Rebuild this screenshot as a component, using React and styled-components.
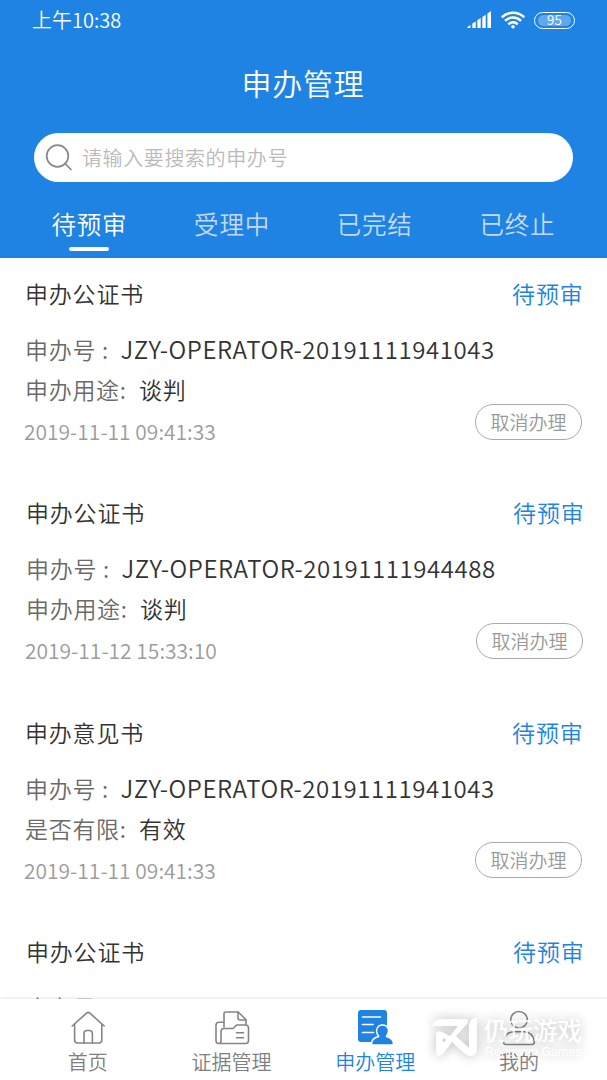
import React, { useState } from 'react'

import styled, { createGlobalStyle } from 'styled-components'

const TABS = ['待预审', '受理中', '已完结', '已终止']

const RECORDS = [
    {
        title: '申办公证书',
        number: 'JZY-OPERATOR-20191111941043',
        label: '申办用途:',
        value: '谈判',
        date: '2019-11-11 09:41:33',
    },
    {
        title: '申办公证书',
        number: 'JZY-OPERATOR-20191111944488',
        label: '申办用途:',
        value: '谈判',
        date: '2019-11-12 15:33:10',
    },
    {
        title: '申办意见书',
        number: 'JZY-OPERATOR-20191111941043',
        label: '是否有限:',
        value: '有效',
        date: '2019-11-11 09:41:33',
    },
    {
        title: '申办公证书',
        number: 'JZY-OPERATOR-20191111944488',
    },
]

function SignalIcon() {
    return (
        <svg width="25" height="18" viewBox="0 0 25 18" fill="#fff">
            <path d="M0.3 17v-1l3.2-2v3zM5.3 17v-4.400l3.400-2.200V17zM10.300 17V9.200l3.400-2.200V17zM15.300 17V6l3.400-2.200V17zM20.400 17V2.600l3.600-2.600V17z" />
        </svg>
    )
}

function WifiIcon() {
    return (
        <svg
            width="24"
            height="18"
            viewBox="0 0 24 18"
            fill="none"
            stroke="#fff"
            strokeWidth="2.500"
        >
            <path d="M0.800 6.300C7 0.200 17 0.200 23.200 6.300" />
            <path d="M4 9.900c4.500-4.400 11.500-4.400 16 0" />
            <path d="M7.300 13.300c2.600-2.600 6.800-2.600 9.400 0" />
            <circle cx="12" cy="15.700" r="1.800" fill="#fff" stroke="none" />
        </svg>
    )
}

function SearchIcon() {
    return (
        <svg
            width="28"
            height="28"
            viewBox="0 0 28 28"
            fill="none"
            stroke="#888"
            strokeWidth="1.700"
            strokeLinecap="round"
        >
            <circle cx="12.500" cy="12" r="10.800" />
            <path d="M20 19.500l6 6" />
        </svg>
    )
}

function HomeIcon() {
    return (
        <svg width="36" height="36" viewBox="0 0 36 36">
            <path d="M2.200 16L16.500 3.200q1.700-1.500 3.400 0L34.200 16" />
            <path d="M4.600 14.800v15.200q0 3 3 3h21.200q3 0 3-3V14.800" />
            <path d="M14 33V23.500q0-3 3-3h2.400q3 0 3 3V33" />
        </svg>
    )
}

function FolderIcon() {
    return (
        <svg width="36" height="36" viewBox="0 0 36 36">
            <path d="M10 17V4q0-2 2-2h12.200l7.800 7.700V15" />
            <path d="M24 2v6q0 2 2 2h6" />
            <path d="M10 12.200H5q-3 0-3 3V30.500q0 3 3 3h26.500q3 0 3-3V18q0-3-3-3H22.500l-3.500 3.500H10q-3 0-3 3V30.500q0 3-2 3" />
            <path d="M22.500 22.800h7M22.500 27.800h7" />
        </svg>
    )
}

function ApplyIcon() {
    return (
        <svg width="36" height="36" viewBox="0 0 36 36">
            <rect x="1" y="0" width="29" height="32" rx="3" fill="#1e83e3" stroke="none" />
            <path
                d="M16.500 35q-2 0-1.800-2.200c.3-3.500 2.800-5.300 7-6.300-4-5-2-11.500 3.800-11.500s7.800 6.500 3.800 11.500c4.200 1 6.700 2.800 7 6.300q.2 2.200-1.800 2.200z"
                fill="#1e83e3"
                stroke="#fff"
                strokeWidth="1.400"
            />
            <path d="M5.500 7h18M5.500 14.500h10.500M5.500 22.500h11" stroke="#fff" strokeWidth="1.700" />
        </svg>
    )
}

function MineIcon() {
    return (
        <svg width="36" height="36" viewBox="0 0 36 36">
            <circle cx="18" cy="9.800" r="8.300" />
            <path d="M5 34.500h26q2.600 0 2.300-2.700c-1-6-4.800-10-10.300-10h-10c-5.500 0-9.300 4-10.300 10Q2.400 34.500 5 34.500z" />
        </svg>
    )
}

const NAV_ITEMS = [
    { label: '首页', icon: <HomeIcon /> },
    { label: '证据管理', icon: <FolderIcon /> },
    { label: '申办管理', icon: <ApplyIcon /> },
    { label: '我的', icon: <MineIcon /> },
]

function App() {
    const [activeTab, setActiveTab] = useState(0)
    const [activeNav, setActiveNav] = useState(2)

    return (
        <Screen>
            <GlobalStyle />
            <Header>
                <StatusBar>
                    <Time>上午10:38</Time>
                    <StatusIcons>
                        <SignalIcon />
                        <WifiIcon />
                        <Battery>
                            <BatteryLevel>95</BatteryLevel>
                        </Battery>
                    </StatusIcons>
                </StatusBar>
                <Title>申办管理</Title>
                <SearchBox>
                    <SearchIcon />
                    <SearchText>请输入要搜索的申办号</SearchText>
                </SearchBox>
                <Tabs>
                    {TABS.map((tab, index) => (
                        <Tab
                            key={tab}
                            $active={index === activeTab}
                            onClick={() => setActiveTab(index)}
                        >
                            {tab}
                        </Tab>
                    ))}
                </Tabs>
            </Header>
            <List>
                {RECORDS.map((record, index) => (
                    <Record key={index}>
                        <RecordHead>
                            <div>{record.title}</div>
                            <RecordStatus>待预审</RecordStatus>
                        </RecordHead>
                        <Field>
                            <FieldLabel $wide>申办号 :</FieldLabel>
                            <FieldNumber>{record.number}</FieldNumber>
                        </Field>
                        {record.date && (
                            <RecordFoot>
                                <div>
                                    <Field>
                                        <FieldLabel>{record.label}</FieldLabel>
                                        <span>{record.value}</span>
                                    </Field>
                                    <RecordDate>{record.date}</RecordDate>
                                </div>
                                <CancelBtn>取消办理</CancelBtn>
                            </RecordFoot>
                        )}
                    </Record>
                ))}
            </List>
            <BottomNav>
                {NAV_ITEMS.map((item, index) => (
                    <NavItem
                        key={item.label}
                        $active={index === activeNav}
                        onClick={() => setActiveNav(index)}
                    >
                        {item.icon}
                        <span>{item.label}</span>
                    </NavItem>
                ))}
                <Watermark>
                    <svg width="48" height="41" viewBox="0 0 48 41">
                        <path
                            fill="#fff"
                            fillRule="evenodd"
                            d="M1 9Q3 2 10 2H34Q39 2 36 7L25 19L38 31V8Q39 1 46 1V31Q46 39 40 39Q36 39 34 37L21 25L12 37Q10 39 8 39Q5 38 5 35V17Q6 13 11 15L19 19L27 9ZM13 21.500a1.600 1.600 0 1 0 0.100 0z"
                        />
                    </svg>
                    <WatermarkText>
                        <WatermarkName>仍玩游戏</WatermarkName>
                        <WatermarkSub>Rengwan Games</WatermarkSub>
                    </WatermarkText>
                </Watermark>
            </BottomNav>
        </Screen>
    )
}

export default App

const GlobalStyle = createGlobalStyle`
    * {
        box-sizing: border-box;
    }
    body {
        margin: 0;
        background: #fff;
        font-family: 'Noto Sans CJK SC', sans-serif;
        font-weight: 350;
    }
`
const Screen = styled.div`
    display: flex;
    flex-direction: column;
    width: 607px;
    height: 1080px;
    overflow: hidden;
    background: #fff;
`
const Header = styled.header`
    display: flex;
    flex-direction: column;
    flex: none;
    height: 258px;
    background: #1e83e3;
    color: #fff;
`
const StatusBar = styled.div`
    display: flex;
    justify-content: space-between;
    align-items: center;
    height: 40px;
    padding: 0 32px;
`
const Time = styled.div`
    font-size: 20px;
    line-height: 40px;
`
const StatusIcons = styled.div`
    display: flex;
    align-items: center;
    gap: 9px;
`
const Battery = styled.div`
    width: 41px;
    height: 17px;
    padding: 2px 3px;
    border: 1.5px solid #fff;
    border-radius: 9px;
`
const BatteryLevel = styled.div`
    height: 11px;
    border-radius: 6px;
    background: rgba(255, 255, 255, 0.3);
    font-size: 13.500px;
    line-height: 9px;
    text-align: center;
`
const Title = styled.h1`
    margin: 0;
    height: 93px;
    font-size: 30px;
    font-weight: 350;
    line-height: 84px;
    letter-spacing: 0.700px;
    text-align: center;
    text-indent: -1px;
`
const SearchBox = styled.div`
    display: flex;
    align-items: center;
    gap: 9px;
    width: 539px;
    height: 49px;
    margin-left: 34px;
    padding-left: 11px;
    border-radius: 25px;
    background: #fff;
`
const SearchText = styled.span`
    font-size: 20px;
    line-height: 30px;
    letter-spacing: 0.600px;
    color: #bababa;
`
const Tabs = styled.div`
    display: grid;
    grid-template-columns: repeat(4, 142.700px);
    padding-left: 18px;
`
const Tab = styled.div`
    display: flex;
    flex-direction: column;
    align-items: center;
    padding-top: 24px;
    font-size: 24.500px;
    line-height: 36px;
    letter-spacing: 0.800px;
    color: ${({ $active }) => ($active ? '#fff' : '#c6daf7')};
    cursor: pointer;
    &::after {
        content: '';
        width: 40px;
        height: 3.500px;
        margin-top: 5px;
        border-radius: 2px;
        background: ${({ $active }) => ($active ? '#fff' : 'transparent')};
    }
`
const List = styled.main`
    flex: 1;
    min-height: 0;
    overflow: hidden;
`
const Record = styled.section`
    height: 219.400px;
    padding: 0 24px 0 25px;
    color: #333;
    &:nth-child(even) {
        padding: 0 23px 0 26px;
    }
`
const RecordHead = styled.div`
    display: flex;
    justify-content: space-between;
    height: 71px;
    font-size: 23px;
    line-height: 71px;
    letter-spacing: 0.800px;
`
const RecordStatus = styled.div`
    margin-right: -0.5px;
    color: #1e83e3;
`
const Field = styled.div`
    display: flex;
    height: 40px;
    font-size: 23px;
    line-height: 40px;
    letter-spacing: 0.700px;
    white-space: pre;
`
const FieldLabel = styled.span`
    width: ${({ $wide }) => ($wide ? '95.5px' : '114px')};
    color: #6a6a6a;
`
const FieldNumber = styled.span`
    font-size: 24px;
    letter-spacing: 0.570px;
`
const RecordFoot = styled.div`
    display: flex;
    justify-content: space-between;
`
const RecordDate = styled.div`
    margin-left: -1px;
    font-size: 21px;
    line-height: 45px;
    color: #9c9c9c;
`
const CancelBtn = styled.button`
    width: 107px;
    height: 36px;
    margin: 34.6px 1px 0 0;
    padding: 0;
    border: 1px solid #aaa;
    border-radius: 18px;
    background: #fff;
    font-family: inherit;
    font-size: 19px;
    font-weight: inherit;
    line-height: 32px;
    color: #999;
    cursor: pointer;
`
const BottomNav = styled.nav`
    position: relative;
    display: grid;
    grid-template-columns: repeat(4, 143.700px);
    flex: none;
    height: 81px;
    padding: 11px 0 0 16px;
    background: #fff;
    box-shadow: 0 -1px 3px rgba(0, 0, 0, 0.1);
`
const NavItem = styled.div`
    display: flex;
    flex-direction: column;
    align-items: center;
    font-size: 20px;
    line-height: 32px;
    color: ${({ $active }) => ($active ? '#1e83e3' : '#808080')};
    cursor: pointer;
    svg {
        fill: none;
        stroke: #858585;
        stroke-width: 1.600;
        stroke-linecap: round;
        stroke-linejoin: round;
    }
`
const Watermark = styled.div`
    position: absolute;
    top: 18px;
    left: 431px;
    display: flex;
    gap: 5px;
    color: #fff;
    opacity: 0.8;
    filter: drop-shadow(0 0 6px rgba(0, 0, 0, 0.34));
    pointer-events: none;
`
const WatermarkText = styled.div`
    display: flex;
    flex-direction: column;
`
const WatermarkName = styled.span`
    font-size: 24.500px;
    font-weight: 500;
    line-height: 26px;
`
const WatermarkSub = styled.span`
    margin: 2px 0 0 1px;
    font-family: 'Liberation Sans', sans-serif;
    font-size: 12.500px;
    line-height: 14px;
    white-space: nowrap;
`
